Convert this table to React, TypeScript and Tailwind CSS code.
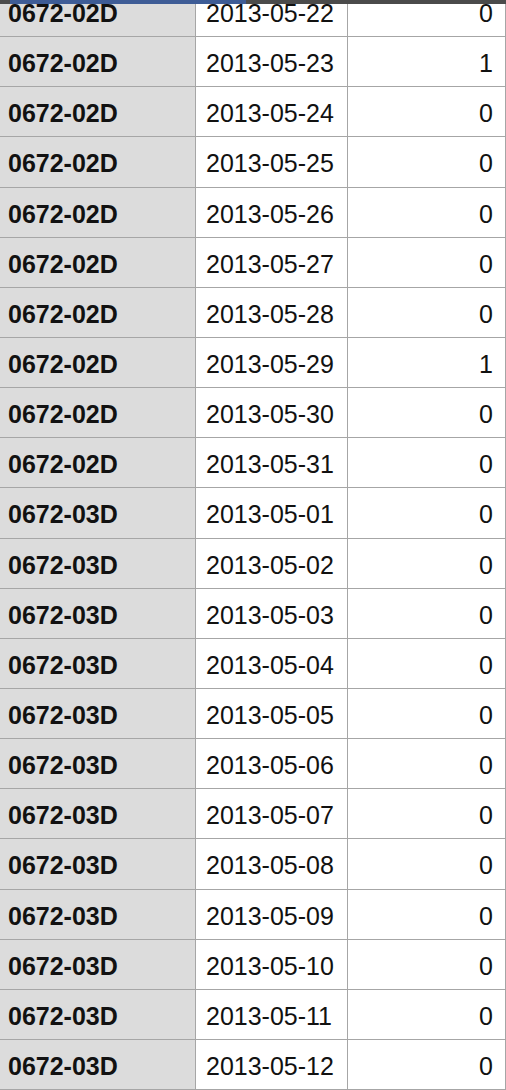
const rows: [string, string, number][] = [
  ["0672-02D", "2013-05-22", 0],
  ["0672-02D", "2013-05-23", 1],
  ["0672-02D", "2013-05-24", 0],
  ["0672-02D", "2013-05-25", 0],
  ["0672-02D", "2013-05-26", 0],
  ["0672-02D", "2013-05-27", 0],
  ["0672-02D", "2013-05-28", 0],
  ["0672-02D", "2013-05-29", 1],
  ["0672-02D", "2013-05-30", 0],
  ["0672-02D", "2013-05-31", 0],
  ["0672-03D", "2013-05-01", 0],
  ["0672-03D", "2013-05-02", 0],
  ["0672-03D", "2013-05-03", 0],
  ["0672-03D", "2013-05-04", 0],
  ["0672-03D", "2013-05-05", 0],
  ["0672-03D", "2013-05-06", 0],
  ["0672-03D", "2013-05-07", 0],
  ["0672-03D", "2013-05-08", 0],
  ["0672-03D", "2013-05-09", 0],
  ["0672-03D", "2013-05-10", 0],
  ["0672-03D", "2013-05-11", 0],
  ["0672-03D", "2013-05-12", 0],
]

export default function App() {
  return (
    <div className="relative w-[506px] h-[1090px] overflow-hidden bg-white text-[#111] font-['Liberation_Sans',Arial,sans-serif]">
      {/* top progress bar */}
      <div className="absolute top-0 left-0 right-0 z-10 flex h-[4px] bg-[#4b4b4b]">
        <div className="ml-[10px] w-[236px] bg-[#3e5c96]" />
      </div>

      <div className="-mt-[13px]">
        {rows.map(([code, date, n], i) => (
          <div
            key={i}
            className="grid grid-cols-[196px_152px_158px] h-[50.15px] border-b border-[#a6a6a6] text-[25px] leading-none"
          >
            <div className="flex items-center pl-[8px] pt-[4px] bg-[#dcdcdc] border-r border-[#a6a6a6] font-bold">
              {code}
            </div>
            <div className="flex items-center pl-[10px] pt-[4px] border-r border-[#a6a6a6]">{date}</div>
            <div className="flex items-center justify-end pr-[12px] pt-[4px] border-r border-[#a6a6a6]">{n}</div>
          </div>
        ))}
      </div>
    </div>
  )
}
